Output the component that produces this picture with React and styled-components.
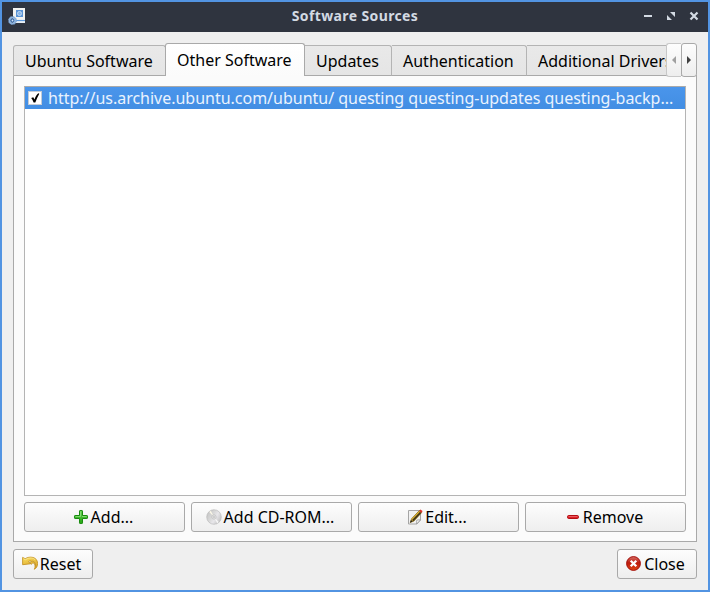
import React from "react";
import styled, { createGlobalStyle, css } from "styled-components";

const Global = createGlobalStyle`
  * { box-sizing: border-box; }
  body { margin: 0; overflow: hidden; }
`;

const Window = styled.div`
  width: 710px;
  height: 592px;
  display: flex;
  flex-direction: column;
  border: 2px solid #5294e2;
  background: #efefef;
  color: #000;
  font: 16px/22px "Noto Sans", sans-serif;
  white-space: nowrap;
  cursor: default;
`;

const TitleBar = styled.header`
  height: 30px;
  flex: none;
  display: grid;
  grid-template-columns: 80px 1fr 80px;
  align-items: center;
  padding: 0 6px;
  background: #2f343f;
  color: #d3dae3;
`;

const Title = styled.h1`
  margin: 0;
  font-size: 14px;
  line-height: 20px;
  font-weight: 700;
  letter-spacing: 0.38px;
  text-align: center;
  padding-bottom: 2px;
`;

const WindowControls = styled.div`
  display: flex;
  justify-content: flex-end;
  gap: 7px;
  padding-bottom: 2px;
`;

const Control = styled.button`
  width: 16px;
  height: 16px;
  padding: 0;
  border: 0;
  background: none;
  color: inherit;
  svg { display: block; }
`;

const Body = styled.main`
  flex: 1;
  padding: 11px;
  display: flex;
  flex-direction: column;
`;

const TabBar = styled.div`
  height: 33px;
  flex: none;
  display: flex;
  align-items: flex-end;
  margin-bottom: -1px;
  z-index: 1;
`;

const TabStrip = styled.div`
  width: 653px;
  height: 33px;
  display: flex;
  align-items: flex-end;
  overflow: hidden;
`;

const Tab = styled.div`
  flex: none;
  width: ${(p) => p.$width}px;
  height: 31px;
  padding: 4px 0 0 11px;
  border: 1px solid #b4b4b4;
  border-bottom-color: #a9a9a9;
  border-left-width: ${(p) => (p.$joined ? 0 : 1)}px;
  border-radius: ${(p) => (p.$joined ? "0 3px 0 0" : "3px 3px 0 0")};
  background: linear-gradient(#e9e9e9, #e5e5e5);
  ${(p) =>
    p.$active &&
    css`
      height: 33px;
      margin-left: -1px;
      padding-top: 5px;
      border-color: #a9a9a9;
      border-bottom: 0;
      background: linear-gradient(#ffffff, #fbfbfb);
      z-index: 1;
    `}
`;

const Scrollers = styled.div`
  display: flex;
  height: 34px;
  align-self: flex-start;
`;

const Scroller = styled.button`
  width: ${(p) => (p.$last ? 16 : 15)}px;
  height: 34px;
  padding: 0;
  display: grid;
  place-items: center;
  border: 1px solid ${(p) => (p.disabled ? "#c8c8c8" : "#a9a9a9")};
  border-right-width: ${(p) => (p.$last ? 1 : 0)}px;
  border-radius: ${(p) => (p.$last ? "3px" : "3px 0 0 3px")};
  background: linear-gradient(#fdfdfd, #eeeeee);
  color: ${(p) => (p.disabled ? "#a0a0a0" : "#404040")};
`;

const Pane = styled.section`
  height: 467px;
  flex: none;
  display: flex;
  flex-direction: column;
  gap: 6px;
  padding: 10px 10px 9px;
  border: 1px solid #a9a9a9;
  background: #fbfbfb;
`;

const SourceList = styled.div`
  height: 410px;
  border: 1px solid #b4b4b4;
  border-top-color: #a9a9a9;
  background: #fff;
`;

const SourceRow = styled.div`
  height: 22px;
  display: flex;
  align-items: center;
  gap: 6px;
  padding-left: 3px;
  background: linear-gradient(#4a95eb, #428ee3);
  color: #eaf3fe;
  letter-spacing: -0.013px;
`;

const CheckBox = styled.span`
  width: 14px;
  height: 14px;
  flex: none;
  border: 1px solid #c4ccd6;
  background: #fff;
  svg { display: block; }
`;

const ButtonRow = styled.div`
  display: flex;
  gap: 6px;
`;

const Footer = styled.footer`
  display: flex;
  justify-content: space-between;
  margin-top: 7px;
`;

const Button = styled.button`
  width: ${(p) => p.$width}px;
  height: 30px;
  display: flex;
  align-items: center;
  justify-content: center;
  gap: 2px;
  padding: 0 3px 0 0;
  border: 1px solid #a9a9a9;
  border-radius: 3px;
  background: linear-gradient(#fdfdfd, #eeeeee);
  color: #000;
  font: inherit;
  svg { flex: none; }
`;

const AppIcon = () => (
  <svg width="20" height="20" viewBox="0 0 20 20">
    <path d="M5 1h12v15H5z" fill="#f3f3f1" />
    <path d="M5.500 12.500h11.500v3H5.500z" fill="#dce8f4" />
    <rect x="8" y="3" width="7" height="7" fill="#5b94d6" />
    <circle cx="11.500" cy="6.500" r="2" fill="#86b3e5" stroke="#c3daf2" strokeWidth="1" />
    <path d="M8 13.500h9" stroke="#5d99dc" strokeWidth="1" />
    <circle cx="4.500" cy="13.500" r="2.900" fill="none" stroke="#8fb4de" strokeWidth="2" />
    <circle cx="4.500" cy="13.500" r="3.900" fill="none" stroke="#7ba6d8" strokeWidth="1" strokeDasharray="1.600 1.460" />
    <circle cx="4.500" cy="13.500" r="1.900" fill="#3c6aa5" />
    <circle cx="4.500" cy="13.500" r="0.900" fill="#d5e5f7" />
  </svg>
);

const MinimizeIcon = () => (
  <svg width="16" height="16"><rect x="4" y="7" width="8" height="2" fill="currentColor" /></svg>
);
const MaximizeIcon = () => (
  <svg width="16" height="16">
    <path d="M7 4h5v5zM4 7v5h5z" fill="currentColor" />
  </svg>
);
const CloseGlyph = () => (
  <svg width="16" height="16">
    <path d="M4.500 4.500l7 7M11.500 4.500l-7 7" stroke="currentColor" strokeWidth="2.200" />
  </svg>
);

const Arrow = ({ left }) => (
  <svg width="6" height="8"><path d={left ? "M5 0v8L1 4z" : "M1 0v8l4-4z"} fill="currentColor" /></svg>
);

const CheckIcon = () => (
  <svg width="12" height="12">
    <path d="M2.200 6l2.100-.8 1.100 2.300C6.300 5 7.500 3 9.300 1.300l1 .4C8.800 4.300 7.400 7.200 6.300 10.500H4.600C4 8.700 3.200 7.200 2.200 6z" fill="#000" />
  </svg>
);

const AddIcon = () => (
  <svg width="16" height="16" viewBox="0 0 16 16">
    <defs>
      <linearGradient id="addFill" x2="0" y2="1">
        <stop offset="0" stopColor="#5fd04c" /><stop offset="1" stopColor="#25a512" />
      </linearGradient>
    </defs>
    <path d="M7.100 1.500h1.800q.600 0 .600.600v4.400h4.400q.600 0 .600.600v1.800q0 .600-.600.600H9.500v4.400q0 .600-.600.600H7.100q-.600 0-.600-.600V9.500H2.100q-.600 0-.600-.600V7.100q0-.600.600-.600h4.400V2.100q0-.600.600-.600z" fill="url(#addFill)" stroke="#188a0e" />
    <path d="M7.500 2.500v5h-5M9 7.500h4.500" fill="none" stroke="#90e080" strokeWidth="0.800" />
  </svg>
);

const DiscIcon = () => (
  <svg width="16" height="16" viewBox="0 0 16 16">
    <defs>
      <linearGradient id="discFill" x1="0" y1="0.200" x2="1" y2="0.800">
        <stop offset="0" stopColor="#c4c4c4" /><stop offset="0.400" stopColor="#dadada" />
        <stop offset="0.600" stopColor="#e8e7ea" /><stop offset="1" stopColor="#bebebe" />
      </linearGradient>
    </defs>
    <circle cx="8" cy="8" r="7.300" fill="url(#discFill)" stroke="#b5b5b5" strokeWidth="0.600" />
    <path d="M8 8L3.300 2.900l1.500-1.100z" fill="#fbf8e8" />
    <path d="M8 8l4.700 5.100-1.500 1.100z" fill="#f8f8f8" />
    <circle cx="8" cy="8" r="2.200" fill="#ededed" stroke="#b4b4b4" strokeWidth="0.600" />
    <circle cx="8" cy="8" r="0.900" fill="#fff" stroke="#999" strokeWidth="0.500" />
  </svg>
);

const EditIcon = () => (
  <svg width="16" height="16" viewBox="0 0 16 16">
    <path d="M1.500 1.500h12v9.500l-3.500 4H1.500z" fill="#f1f1f1" stroke="#a5a5a5" />
    <path d="M9.500 15l.300-3.900 3.700-.300z" fill="#fff" stroke="#999" strokeWidth="0.800" />
    <path d="M3.200 13.500L4.600 9.700l7.800-8.200 2.200 2.100L7 12z" fill="#e3b932" stroke="#80610f" strokeWidth="0.700" />
    <path d="M5.700 11.700l8-8.300" stroke="#40351a" strokeWidth="1.700" />
    <path d="M3 13.700l1-2.700 1.700 1.500z" fill="#222" />
    <path d="M12.100 1.900l1.300-1.300 2.200 1.400-1.200 1.900z" fill="#d8342b" />
  </svg>
);

const RemoveIcon = () => (
  <svg width="16" height="16" viewBox="0 0 16 16">
    <rect x="2.500" y="6.500" width="11" height="3" rx="1.200" fill="#dc2028" stroke="#b40e13" />
    <path d="M3.500 7.500h9" stroke="#ef777a" strokeWidth="0.700" />
  </svg>
);

const ResetIcon = () => (
  <svg width="16" height="16" viewBox="0 0 16 16">
    <defs>
      <linearGradient id="resetFill" x2="0.300" y2="1">
        <stop offset="0" stopColor="#f9dc5c" /><stop offset="1" stopColor="#dba72b" />
      </linearGradient>
    </defs>
    <path d="M.600 1.400L3.200 2.700C7.300-.1 15.600.600 15.600 7.500c0 2.800-1.200 4.700-3.300 5.800 1.100-2.100 1.300-5.100-.600-6-1-.500-2 .100-2.200 1C8.100 7.500 8.300 5.700 9.300 5.200 8.300 4.700 7.300 5 6.600 5.600l2 2.200L.600 8.700z" fill="url(#resetFill)" stroke="#c08c18" strokeWidth="0.800" strokeLinejoin="round" />
    <path d="M9.300 5.300c2.600-.700 4.700 1.700 3.900 5" fill="none" stroke="#b68932" strokeWidth="0.700" />
    <path d="M1.500 2.700l2 1C7.200 1.200 11.500 1.500 13.300 4" fill="none" stroke="#fff1a3" strokeWidth="0.700" />
  </svg>
);

const CloseIcon = () => (
  <svg width="16" height="16" viewBox="0 0 16 16">
    <defs>
      <linearGradient id="closeFill" x2="0" y2="1">
        <stop offset="0" stopColor="#d77068" /><stop offset="0.450" stopColor="#bd1b0d" />
        <stop offset="1" stopColor="#df4613" />
      </linearGradient>
    </defs>
    <circle cx="7.500" cy="7.500" r="6.900" fill="url(#closeFill)" stroke="#a30f0b" strokeWidth="1" />
    <path d="M4.700 4.700l5.600 5.600M10.300 4.700l-5.600 5.600" stroke="#fff" strokeWidth="2.300" />
  </svg>
);

const tabs = [
  { label: "Ubuntu Software", width: 153 },
  { label: "Other Software", width: 140, active: true },
  { label: "Updates", width: 87, joined: true },
  { label: "Authentication", width: 135, joined: true },
  { label: "Additional Drivers", width: 160, joined: true },
];

const actions = [
  { label: "Add...", Icon: AddIcon },
  { label: "Add CD-ROM...", Icon: DiscIcon },
  { label: "Edit...", Icon: EditIcon },
  { label: "Remove", Icon: RemoveIcon },
];

export default function App() {
  return (
    <>
      <Global />
      <Window>
        <TitleBar>
          <AppIcon />
          <Title>Software Sources</Title>
          <WindowControls>
            <Control aria-label="Minimize"><MinimizeIcon /></Control>
            <Control aria-label="Maximize"><MaximizeIcon /></Control>
            <Control aria-label="Close window"><CloseGlyph /></Control>
          </WindowControls>
        </TitleBar>
        <Body>
          <TabBar>
            <TabStrip>
              {tabs.map((t) => (
                <Tab key={t.label} $width={t.width} $active={t.active} $joined={t.joined}>{t.label}</Tab>
              ))}
            </TabStrip>
            <Scrollers>
              <Scroller disabled><Arrow left /></Scroller>
              <Scroller $last><Arrow /></Scroller>
            </Scrollers>
          </TabBar>
          <Pane>
            <SourceList>
              <SourceRow>
                <CheckBox><CheckIcon /></CheckBox>
                <span>http://us.archive.ubuntu.com/ubuntu/ questing questing-updates questing-backp...</span>
              </SourceRow>
            </SourceList>
            <ButtonRow>
              {actions.map(({ label, Icon }) => (
                <Button key={label} $width={161}><Icon />{label}</Button>
              ))}
            </ButtonRow>
          </Pane>
          <Footer>
            <Button $width={80}><ResetIcon />Reset</Button>
            <Button $width={80}><CloseIcon />Close</Button>
          </Footer>
        </Body>
      </Window>
    </>
  );
}
